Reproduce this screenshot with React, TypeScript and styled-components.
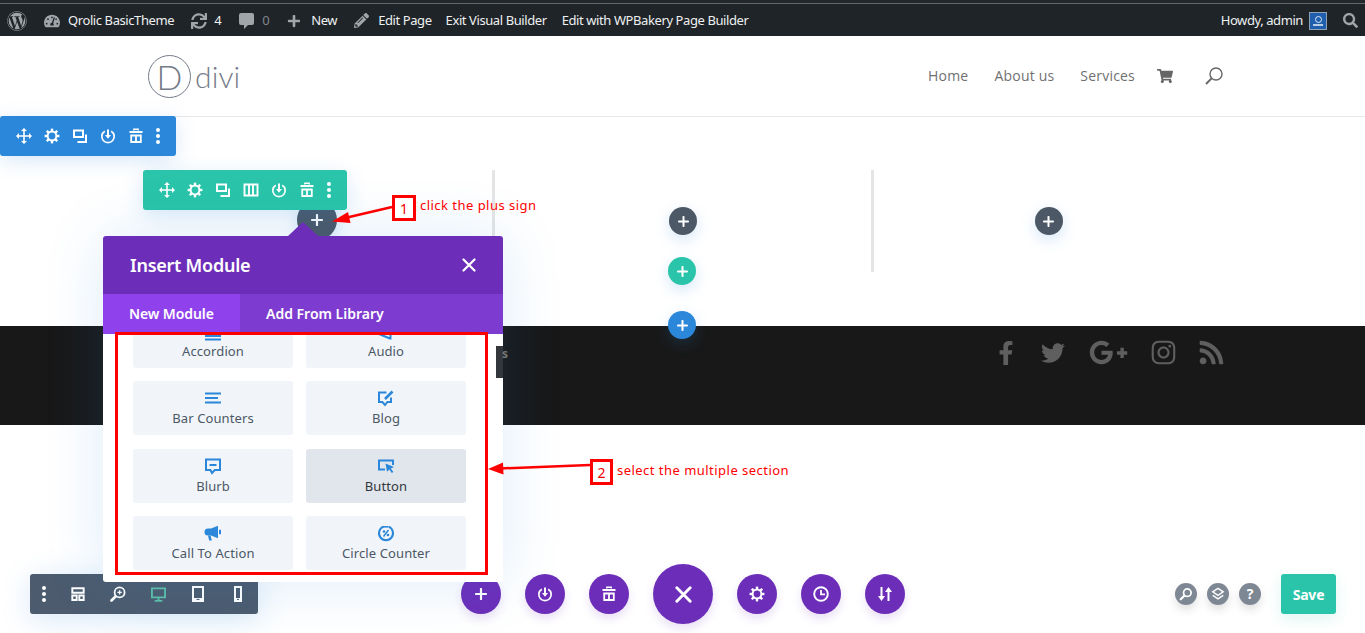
import React from "react";
import styled, { createGlobalStyle } from "styled-components";
import { FaWordpress, FaTachometerAlt, FaSync, FaPlus, FaPencilAlt, FaSearch, FaShoppingCart, FaFacebookF, FaTwitter, FaGooglePlusG, FaInstagram, FaRss } from "react-icons/fa";

const Global = createGlobalStyle`
  html, body { margin: 0; padding: 0; height: 633px; overflow: hidden; background: #fff; }
  body { font-family: "Noto Sans", "Open Sans", sans-serif; }
  * { box-sizing: border-box; }
`;

const Page = styled.div`position: relative; width: 1365px; height: 633px; overflow: hidden;`;

/* ---------- admin bar ---------- */
const AdminBar = styled.div`
  height: 36px; background: #1f2428; color: #eef0f1; display: flex; align-items: center;
  font-size: 13px; padding: 2px 7px 0 7px; border-top: 3px solid #23282d; position: relative;
  &::before { content: ""; position: absolute; left: 0; right: 0; top: 0; height: 1px; background: #666; }
`;
const BarItem = styled.span<{ $ml?: number; $dim?: boolean }>`
  margin-left: ${p => p.$ml ?? 0}px; display: inline-flex; align-items: center; white-space: nowrap;
  color: ${p => (p.$dim ? "#80868b" : "#eef0f1")}; letter-spacing: -0.41px; line-height: 1;
`;
const BarIcon = styled.span<{ $ml?: number; $size: number }>`
  margin-left: ${p => p.$ml ?? 0}px; display: inline-flex; color: #a0a5aa; font-size: ${p => p.$size}px;
`;
const BarSpacer = styled.div`flex: 1;`;
const Avatar = styled.span`
  width: 18px; height: 18px; margin-left: 6px; background: #1f5fae; border: 1px solid #8ea3b8;
  display: inline-flex; flex-direction: column; align-items: center; justify-content: center; gap: 1px;
  &::before { content: ""; width: 5px; height: 5px; border-radius: 50%; border: 1px solid #dfe9f3; }
  &::after { content: ""; width: 10px; height: 2px; background: #b9cde4; }
`;

/* ---------- site header ---------- */
const Header = styled.header`
  height: 81px; border-bottom: 1px solid #e8e8e8; display: flex; align-items: center;
  padding: 0 142px 0 148px; position: relative;
`;
const LogoMark = styled.span`
  width: 43px; height: 43px; border-radius: 50%; border: 1.5px solid #747a88; color: #747a88;
  display: flex; align-items: center; justify-content: center; margin-top: 1px;
  font: 300 34px/1 Lato, sans-serif;
`;
const LogoWord = styled.span`
  font: 300 30px/1 Lato, sans-serif; color: #747a88; margin-left: 4px; letter-spacing: 0.1px;
`;
const Nav = styled.nav`
  margin-left: auto; display: flex; align-items: center; font: 500 14px/1 "Open Sans", sans-serif;
`;
const NavLink = styled.span<{ $ml: number }>`margin-left: ${p => p.$ml}px; color: #707070; margin-top: -1px; letter-spacing: 0.2px;`;
const NavIcon = styled.span<{ $ml: number }>`margin-left: ${p => p.$ml}px; display: inline-flex; color: #666; font-size: 16px;`;

/* ---------- content section ---------- */
const Section = styled.section`height: 209px; display: flex; padding-top: 53px; align-items: flex-start;`;
const Column = styled.div<{ $w: number; $line?: boolean }>`
  width: ${p => p.$w}px; height: 102px; display: flex; flex-direction: column; align-items: center;
  border-left: ${p => (p.$line ? "3px solid #e5e5e5" : "none")};
`;
const FirstColumn = styled(Column)`align-items: flex-start; padding: 30px 0 0 297px;`;
const ThirdColumn = styled(Column)`border-left: none;`;
const PlusStack = styled.div`
  display: flex; flex-direction: column; align-items: center; margin: 37px 0 0 0; position: relative; z-index: 2;
`;
const AddButton = styled.span<{ $bg: string; $size?: number; $mt?: number; $ml?: number }>`
  width: ${p => p.$size ?? 28}px; height: ${p => p.$size ?? 28}px; border-radius: 50%;
  background: ${p => p.$bg}; color: #fff; display: flex; align-items: center; justify-content: center;
  margin-top: ${p => p.$mt ?? 0}px; margin-left: ${p => p.$ml ?? 0}px;
  box-shadow: 0 5px 15px rgba(43, 135, 218, 0.2); flex: none; position: relative; z-index: 2;
`;

/* ---------- footer ---------- */
const Footer = styled.footer`
  height: 99px; background: #181818; display: flex; justify-content: flex-end; align-items: flex-start;
  padding: 14px 140px 0 0; color: #5f5f5f;
`;
const Social = styled.span<{ $ml: number; $size: number }>`
  margin-left: ${p => p.$ml}px; display: inline-flex; font-size: ${p => p.$size}px; height: 25px; align-items: center;
`;

/* ---------- floating toolbars ---------- */
const Toolbar = styled.div<{ $bg: string; $top: number; $left: number; $pad: number }>`
  position: absolute; top: ${p => p.$top}px; left: ${p => p.$left}px; height: 40px; background: ${p => p.$bg};
  border-radius: 3px; color: #fff; display: flex; align-items: center; padding: 0 ${p => p.$pad}px;
  box-shadow: 0 5px 20px rgba(43, 135, 218, 0.18); z-index: 3;
`;
const ToolIcon = styled.span<{ $w?: number }>`
  width: ${p => p.$w ?? 28}px; display: flex; justify-content: center;
`;

/* ---------- modal ---------- */
const Modal = styled.div`
  position: absolute; left: 103px; top: 236px; width: 400px; height: 346px; background: #fff; border-radius: 3px;
  box-shadow: 0 0 60px rgba(43, 135, 218, 0.16); z-index: 5; display: flex; flex-direction: column;
  &::before {
    content: ""; position: absolute; left: 185px; top: -14px; width: 0; height: 0;
    border-left: 15px solid transparent; border-right: 15px solid transparent; border-bottom: 14px solid #6c2eb9;
  }
`;
const ModalHead = styled.div`
  height: 58px; background: #6c2eb9; color: #fff; border-radius: 3px 3px 0 0; display: flex; align-items: center;
  justify-content: space-between; padding: 0 27px; font-size: 18px; font-weight: 600; letter-spacing: -0.25px; flex: none;
`;
const Tabs = styled.div`height: 40px; background: #7e3bd0; display: flex; flex: none;`;
const Tab = styled.div<{ $active?: boolean }>`
  width: ${p => (p.$active ? 137 : 170)}px; background: ${p => (p.$active ? "#8f42ec" : "transparent")}; color: #fff;
  font-size: 14px; font-weight: 600; display: flex; align-items: center; padding: 0 0 2px 26px; letter-spacing: ${p => (p.$active ? "-0.1px" : "0")}; white-space: nowrap;
`;
const ModalBody = styled.div`flex: 1; overflow: hidden; padding: 0 37px 0 30px;`;
const ModuleGrid = styled.div`
  display: grid; grid-template-columns: 160px 160px; column-gap: 13px; row-gap: 13.33px; margin-top: -20px;
`;
const ModuleCard = styled.div<{ $hover?: boolean }>`
  height: 54px; border-radius: 3px; background: ${p => (p.$hover ? "#e1e5ec" : "#f1f5f9")};
  color: ${p => (p.$hover ? "#32373c" : "#4c5866")}; display: flex; flex-direction: column; align-items: center;
  padding-top: 9px; font-size: 13px; line-height: 18px; letter-spacing: 0.1px;
  svg { color: #2b87da; margin-bottom: 3px; overflow: visible; }
`;
const SideTab = styled.div`
  position: absolute; left: 496px; top: 346px; width: 7px; height: 32px; background: #33373b; color: #777;
  font-size: 12px; font-weight: 700; line-height: 16px; padding-left: 6px; z-index: 6;
`;

/* ---------- bottom bar ---------- */
const BottomBar = styled.div`
  position: absolute; left: 0; right: 0; top: 564px; height: 60px; display: flex; align-items: center; z-index: 4;
`;
const ViewBar = styled.div`
  margin-left: 30px; width: 228px; height: 40px; background: #4c5b6e; border-radius: 3px; color: #fff; display: flex;
  align-items: center; box-shadow: 0 5px 30px rgba(43, 135, 218, 0.2); flex: none;
`;
const ViewIcon = styled.span<{ $w: number; $green?: boolean }>`
  width: ${p => p.$w}px; display: flex; justify-content: center; color: ${p => (p.$green ? "#5ebfa8" : "#fff")};
`;
const Actions = styled.div`margin-left: 203px; display: flex; align-items: center; gap: 24px; flex: none;`;
const Fab = styled.span<{ $big?: boolean }>`
  width: ${p => (p.$big ? 60 : 40)}px; height: ${p => (p.$big ? 60 : 40)}px; border-radius: 50%; background: #6c2eb9;
  color: #fff; display: flex; align-items: center; justify-content: center; box-shadow: 0 5px 10px rgba(108, 46, 185, 0.15); flex: none;
`;
const MiniGroup = styled.div`margin-left: 270px; display: flex; gap: 10px; flex: none;`;
const Mini = styled.span`
  width: 22px; height: 22px; border-radius: 50%; background: #7e8794; color: #fff; display: flex; align-items: center;
  justify-content: center; font-size: 14px; font-weight: 700; box-shadow: 0 5px 10px rgba(0, 0, 0, 0.12); line-height: 1;
`;
const SaveButton = styled.span`
  margin-left: 20px; width: 55px; height: 40px; background: #29c4a9; color: #fff; border-radius: 3px; display: flex;
  align-items: center; justify-content: center; font-size: 14px; font-weight: 700; flex: none;
  box-shadow: 0 5px 15px rgba(41, 196, 169, 0.15); letter-spacing: -0.2px;
`;

/* ---------- annotations ---------- */
const Marks = styled.svg`position: absolute; left: 0; top: 0; width: 1365px; height: 633px; z-index: 7; pointer-events: none;`;
const NoteBox = styled.span<{ $l: number; $t: number; $w: number }>`
  position: absolute; left: ${p => p.$l}px; top: ${p => p.$t}px; width: ${p => p.$w}px; height: 26px; border: 3px solid #f00;
  background: #fff; color: #e00; display: flex; align-items: center; justify-content: center; font-size: 14px; z-index: 8;
`;
const Note = styled.span<{ $l: number; $t: number }>`
  position: absolute; left: ${p => p.$l}px; top: ${p => p.$t}px; color: #f00; font-size: 13px; line-height: 18px;
  white-space: nowrap; z-index: 8; letter-spacing: 0.47px;
`;
const RedFrame = styled.div`
  position: absolute; left: 115px; top: 332px; width: 373px; height: 243px; border: 3px solid #f00; z-index: 7;
`;

/* ---------- icons ---------- */
const S = ({ size = 16, children }: { size?: number; children: React.ReactNode }) => (
  <svg width={size} height={size} viewBox="0 0 16 16" fill="none" stroke="currentColor" strokeWidth="2">{children}</svg>
);
const Plus = ({ size = 11 }: { size?: number }) => (
  <svg width={size} height={size} viewBox="0 0 12 12" stroke="currentColor" strokeWidth="2.2" strokeLinecap="round"><path d="M6 1v10M1 6h10" /></svg>
);
const Cross = ({ size = 14, sw = 2.2 }: { size?: number; sw?: number }) => (
  <svg width={size} height={size} viewBox="0 0 14 14" stroke="currentColor" strokeWidth={sw} strokeLinecap="round"><path d="M1.5 1.5l11 11M12.5 1.5l-11 11" /></svg>
);
const CommentIcon = () => (
  <svg width="15" height="16" viewBox="0 0 15 16" fill="currentColor"><path d="M2 0h11a2 2 0 0 1 2 2v8a2 2 0 0 1-2 2H9l-4 4v-4H2a2 2 0 0 1-2-2V2a2 2 0 0 1 2-2z" /></svg>
);
const Move = () => (
  <S><path d="M8 2v12M2 8h12" strokeWidth="1.6" /><path d="M8 0l3 3H5zM8 16l-3-3h6zM0 8l3-3v6zM16 8l-3 3V5z" fill="currentColor" stroke="none" /></S>
);
const Gear = () => (
  <S>
    <circle cx="8" cy="8" r="4.4" strokeWidth="2" />
    {[0, 45, 90, 135, 180, 225, 270, 315].map(a => (
      <rect key={a} x="6.8" y="0.6" width="2.4" height="3" fill="currentColor" stroke="none" transform={`rotate(${a} 8 8)`} />
    ))}
  </S>
);
const Clone = () => (
  <S><path d="M2 2.5h9v6.5H2z" /><path d="M14 6.5V14H5.5" /></S>
);
const Columns = () => (
  <S><path d="M1.5 2.5h13v11h-13zM6 2.5v11M10 2.5v11" strokeWidth="1.9" /></S>
);
const SaveIcon = () => (
  <S><path d="M4.8 3.2a6.2 6.2 0 1 0 6.4 0" strokeWidth="1.7" /><path d="M8 1.5v6" /><path d="M5 7h6l-3 3.8z" fill="currentColor" stroke="none" /></S>
);
const Trash = () => (
  <S>
    <path d="M5.8 2.5V1.2h4.4v1.3" strokeWidth="1.4" />
    <path d="M1.5 3h13v2h-13z" fill="currentColor" stroke="none" />
    <path d="M3.2 7.5h9.6v6.5H3.2zM8 7.5v6.5" strokeWidth="1.8" />
  </S>
);
const Dots = () => (
  <svg width="6" height="16" viewBox="0 0 6 16" fill="currentColor"><circle cx="3" cy="2" r="2" /><circle cx="3" cy="8" r="2" /><circle cx="3" cy="14" r="2" /></svg>
);
const Bars = () => (
  <S><path d="M0 3.5h16M0 8h13M0 12.5h16" /></S>
);
const AccordionIcon = () => (
  <S><path d="M0 13h16M0 16.5h16" /></S>
);
const AudioIcon = () => (
  <S><path d="M1 11l11 4.5M12.5 10.5v6" /></S>
);
const BlogIcon = () => (
  <S><path d="M8.5 2.5H1v9.5h3.4l2.6 3 2.4-3H13V7.5" /><path d="M7 9l7.5-7.5" strokeWidth="2.6" /></S>
);
const BlurbIcon = () => (
  <S><path d="M1 1.5h14v10.5H9.8L7 15l-1.6-3H1z" /><path d="M4.5 7h7" /></S>
);
const ButtonIcon = () => (
  <S><path d="M7 11.5H1v-9h14V7" /><path d="M7.5 5.5l8.5 3.4-3.2 1.5 2.6 3.6-1.6 1-2.5-3.6-2.3 2.3z" fill="currentColor" stroke="none" /></S>
);
const CtaIcon = () => (
  <S>
    <path d="M3 3.5h3L13 .8v12.4L6 10.5H3a3.5 3.5 0 0 1 0-7z" fill="currentColor" stroke="none" />
    <path d="M3 10.5l1.2 5h2.6L5.6 10.5" fill="currentColor" stroke="none" />
    <path d="M15 4.8v4.4" strokeWidth="2" />
  </S>
);
const CircleIcon = () => (
  <S>
    <path d="M5.5 1.6A7 7 0 1 0 10.5 1.6" />
    <path d="M5 1.8h5" strokeWidth="1.6" />
    <path d="M10.5 5l-5 6.5" strokeWidth="1.5" />
    <circle cx="6" cy="6.5" r="1.3" fill="currentColor" stroke="none" />
    <circle cx="10" cy="10" r="1.3" fill="currentColor" stroke="none" />
  </S>
);
const LayoutIcon = () => (
  <S size={14}><path d="M1.5 1.5h13v5h-13zM1.5 9.8h5v5h-5zM9.5 9.8h5v5h-5z" strokeWidth="2.2" /></S>
);
const ZoomPlus = () => (
  <S>
    <circle cx="9.6" cy="6.4" r="5" strokeWidth="1.8" />
    <path d="M5.5 10.5L1.5 14.5" strokeWidth="2.6" strokeLinecap="round" />
    <path d="M9.6 4.2v4.4M7.4 6.4h4.4" strokeWidth="1.4" />
  </S>
);
const Desktop = () => (
  <S size={15}><path d="M1 1.5h14v9.5H1z" /><path d="M8 11v3M4 14.8h8" /></S>
);
const Tablet = () => (
  <S><path d="M3 1h10v14H3z" /><path d="M3 12h10v3H3z" fill="currentColor" stroke="none" /><path d="M6.5 13.4h3" strokeWidth="1" stroke="#4c5b6e" /></S>
);
const Phone = () => (
  <S><path d="M5 1h6v14H5z" /><path d="M5 12h6v3H5z" fill="currentColor" stroke="none" /><path d="M7 13.4h2" strokeWidth="1" stroke="#4c5b6e" /></S>
);
const MiniSearch = () => (
  <S size={14}><circle cx="9.5" cy="6.5" r="4.3" strokeWidth="2" /><path d="M6 10l-4 4" strokeWidth="2.6" strokeLinecap="round" /></S>
);
const Layers = () => (
  <S size={14}>
    <path d="M8 1.5l6 4-6 4-6-4z" strokeWidth="1.6" />
    <path d="M2 9.5l6 4 6-4" strokeWidth="1.6" />
  </S>
);
const Clock = () => (
  <S><circle cx="8" cy="8" r="6.8" strokeWidth="1.9" /><path d="M8 4v4.4h4" strokeWidth="1.8" /></S>
);
const Sort = () => (
  <S>
    <path d="M4.5 1v10M11.5 15V5" strokeWidth="2" />
    <path d="M1 10h7l-3.5 5zM8 6h7l-3.5-5z" fill="currentColor" stroke="none" />
  </S>
);
const SiteSearch = () => (
  <svg width="18" height="18" viewBox="0 0 18 18" fill="none" stroke="#666" strokeWidth="1.4"><circle cx="11" cy="7" r="6" /><path d="M6.6 11.4L1 17" strokeWidth="2" /></svg>
);

const tools = [<Move />, <Gear />, <Clone />, <SaveIcon />, <Trash />];
const rowTools = [<Move />, <Gear />, <Clone />, <Columns />, <SaveIcon />, <Trash />];

const modules: { label: string; icon: React.ReactNode; hover?: boolean }[] = [
  { label: "Accordion", icon: <AccordionIcon /> },
  { label: "Audio", icon: <AudioIcon /> },
  { label: "Bar Counters", icon: <Bars /> },
  { label: "Blog", icon: <BlogIcon /> },
  { label: "Blurb", icon: <BlurbIcon /> },
  { label: "Button", icon: <ButtonIcon />, hover: true },
  { label: "Call To Action", icon: <CtaIcon /> },
  { label: "Circle Counter", icon: <CircleIcon /> },
];

export default function App() {
  return (
    <Page>
      <Global />
      <AdminBar>
        <BarIcon $size={20}><FaWordpress /></BarIcon>
        <BarIcon $ml={17} $size={16}><FaTachometerAlt /></BarIcon>
        <BarItem $ml={8}>Qrolic BasicTheme</BarItem>
        <BarIcon $ml={17} $size={16}><FaSync /></BarIcon>
        <BarItem $ml={7}>4</BarItem>
        <BarIcon $ml={18} $size={15}><CommentIcon /></BarIcon>
        <BarItem $ml={8} $dim>0</BarItem>
        <BarIcon $ml={18} $size={14}><FaPlus /></BarIcon>
        <BarItem $ml={10}>New</BarItem>
        <BarIcon $ml={17} $size={15}><FaPencilAlt /></BarIcon>
        <BarItem $ml={9}>Edit Page</BarItem>
        <BarItem $ml={14}>Exit Visual Builder</BarItem>
        <BarItem $ml={15}>Edit with WPBakery Page Builder</BarItem>
        <BarSpacer />
        <BarItem>Howdy, admin</BarItem>
        <Avatar />
        <BarIcon $ml={16} $size={15}><FaSearch /></BarIcon>
      </AdminBar>

      <Header>
        <LogoMark>D</LogoMark>
        <LogoWord>divi</LogoWord>
        <Nav>
          <NavLink $ml={0}>Home</NavLink>
          <NavLink $ml={26}>About us</NavLink>
          <NavLink $ml={26}>Services</NavLink>
          <NavIcon $ml={22}><FaShoppingCart /></NavIcon>
          <NavIcon $ml={32}><SiteSearch /></NavIcon>
        </Nav>
      </Header>

      <Section>
        <FirstColumn $w={492}>
          <AddButton $bg="#4c5866" $size={40}><Plus size={12} /></AddButton>
        </FirstColumn>
        <Column $w={379} $line>
          <PlusStack>
            <AddButton $bg="#4c5866"><Plus /></AddButton>
            <AddButton $bg="#29c4a9" $mt={22} $ml={-2}><Plus /></AddButton>
            <AddButton $bg="#2b87da" $mt={26} $ml={-2}><Plus /></AddButton>
          </PlusStack>
        </Column>
        <Column $w={352} $line>
          <PlusStack><AddButton $bg="#4c5866"><Plus /></AddButton></PlusStack>
        </Column>
      </Section>

      <Footer>
        <Social $ml={0} $size={24}><FaFacebookF /></Social>
        <Social $ml={23} $size={24}><FaTwitter /></Social>
        <Social $ml={24} $size={39}><FaGooglePlusG /></Social>
        <Social $ml={22} $size={27}><FaInstagram /></Social>
        <Social $ml={21} $size={27}><FaRss /></Social>
      </Footer>

      <Toolbar $bg="#2b87da" $top={116} $left={0} $pad={10}>
        {tools.map((t, i) => <ToolIcon key={i}>{t}</ToolIcon>)}
        <ToolIcon $w={16}><Dots /></ToolIcon>
      </Toolbar>
      <Toolbar $bg="#29c4a9" $top={170} $left={143} $pad={10}>
        {rowTools.map((t, i) => <ToolIcon key={i}>{t}</ToolIcon>)}
        <ToolIcon $w={16}><Dots /></ToolIcon>
      </Toolbar>

      <Modal>
        <ModalHead>
          Insert Module
          <Cross />
        </ModalHead>
        <Tabs>
          <Tab $active>New Module</Tab>
          <Tab>Add From Library</Tab>
        </Tabs>
        <ModalBody>
          <ModuleGrid>
            {modules.map(m => (
              <ModuleCard key={m.label} $hover={m.hover}>
                {m.icon}
                {m.label}
              </ModuleCard>
            ))}
          </ModuleGrid>
        </ModalBody>
      </Modal>
      <SideTab>s</SideTab>

      <BottomBar>
        <ViewBar>
          <ViewIcon $w={28}><Dots /></ViewIcon>
          <ViewIcon $w={40}><LayoutIcon /></ViewIcon>
          <ViewIcon $w={40}><ZoomPlus /></ViewIcon>
          <ViewIcon $w={40} $green><Desktop /></ViewIcon>
          <ViewIcon $w={40}><Tablet /></ViewIcon>
          <ViewIcon $w={40}><Phone /></ViewIcon>
        </ViewBar>
        <Actions>
          <Fab><Plus size={12} /></Fab>
          <Fab><SaveIcon /></Fab>
          <Fab><Trash /></Fab>
          <Fab $big><Cross size={17} sw={2.4} /></Fab>
          <Fab><Gear /></Fab>
          <Fab><Clock /></Fab>
          <Fab><Sort /></Fab>
        </Actions>
        <MiniGroup>
          <Mini><MiniSearch /></Mini>
          <Mini><Layers /></Mini>
          <Mini>?</Mini>
        </MiniGroup>
        <SaveButton>Save</SaveButton>
      </BottomBar>

      <RedFrame />
      <Marks viewBox="0 0 1365 633">
        <path d="M392 207L345 218" stroke="#f00" strokeWidth="2.5" />
        <path d="M332 221.5l16-9.5 2.5 11z" fill="#f00" />
        <path d="M590 465L500 468.5" stroke="#f00" strokeWidth="2.5" />
        <path d="M488 469l15-6.5 .5 12z" fill="#f00" />
      </Marks>
      <NoteBox $l={392} $t={195} $w={24}>1</NoteBox>
      <Note $l={420} $t={196}>click the plus sign</Note>
      <NoteBox $l={590} $t={459} $w={23}>2</NoteBox>
      <Note $l={617} $t={461}>select the multiple section</Note>
    </Page>
  );
}
